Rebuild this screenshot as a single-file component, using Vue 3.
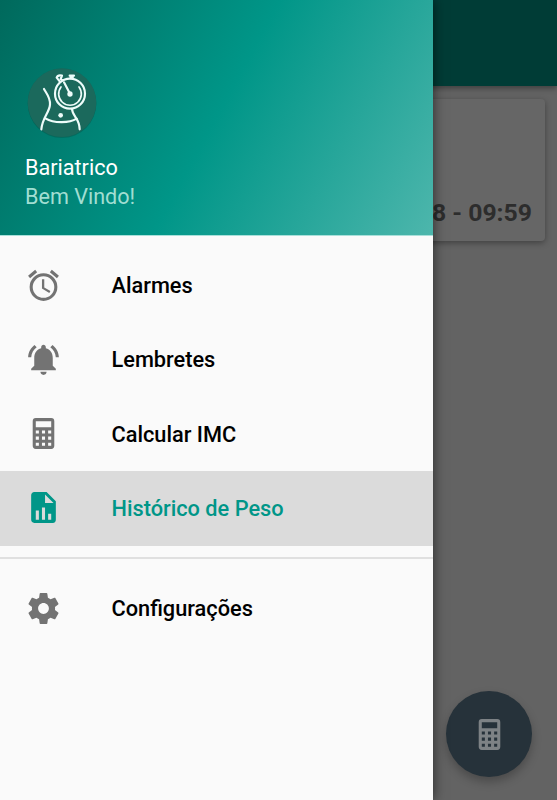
<script setup>
const calculator =
  'M7,2H17A2,2 0 0,1 19,4V20A2,2 0 0,1 17,22H7A2,2 0 0,1 5,20V4A2,2 0 0,1 7,2M7,4V8H17V4H7M7,10V12H9V10H7M11,10V12H13V10H11M15,10V12H17V10H15M7,14V16H9V14H7M11,14V16H13V14H11M15,14V16H17V14H15M7,18V20H9V18H7M11,18V20H13V18H11M15,18V20H17V18H15Z'

const groups = [
  [
    {
      label: 'Alarmes',
      icon: 'M12,20A7,7 0 0,1 5,13A7,7 0 0,1 12,6A7,7 0 0,1 19,13A7,7 0 0,1 12,20M12,4A9,9 0 0,0 3,13A9,9 0 0,0 12,22A9,9 0 0,0 21,13A9,9 0 0,0 12,4M12.5,8H11V14L15.75,16.85L16.5,15.62L12.5,13.25V8M7.88,3.39L6.6,1.86L2,5.71L3.29,7.24L7.88,3.39M22,5.72L17.4,1.86L16.11,3.39L20.71,7.25L22,5.72Z',
    },
    {
      label: 'Lembretes',
      icon: 'M7.58 4.08L6.15 2.65C3.75 4.48 2.17 7.3 2.03 10.5h2c.15-2.65 1.51-4.97 3.55-6.42zm12.39 6.42h2c-.15-3.2-1.73-6.02-4.12-7.85l-1.42 1.43c2.02 1.45 3.39 3.77 3.54 6.42zM18 11c0-3.07-1.64-5.64-4.5-6.32V4c0-.83-.67-1.5-1.5-1.5s-1.5.67-1.5 1.5v.68C7.63 5.36 6 7.92 6 11v5l-2 2v1h16v-1l-2-2v-5zm-6 11c.14 0 .27-.01.4-.04.65-.14 1.18-.58 1.44-1.18.1-.24.15-.5.15-.78h-4c.01 1.1.9 2 2.01 2z',
    },
    { label: 'Calcular IMC', icon: calculator },
    {
      label: 'Histórico de Peso',
      active: true,
      icon: 'M13,9H18.5L13,3.5V9M6,2H14L20,8V20A2,2 0 0,1 18,22H6C4.89,22 4,21.1 4,20V4C4,2.89 4.89,2 6,2M7,20H9V14H7V20M11,20H13V12H11V20M15,20H17V16H15V20Z',
    },
  ],
  [
    {
      label: 'Configurações',
      icon: 'M19.43 12.98c.04-.32.07-.64.07-.98s-.03-.66-.07-.98l2.11-1.65c.19-.15.24-.42.12-.64l-2-3.46c-.12-.22-.39-.3-.61-.22l-2.49 1c-.52-.4-1.08-.73-1.69-.98l-.38-2.65C14.46 2.18 14.25 2 14 2h-4c-.25 0-.46.18-.49.42l-.38 2.65c-.61.25-1.17.59-1.69.98l-2.49-1c-.23-.09-.49 0-.61.22l-2 3.46c-.13.22-.07.49.12.64l2.11 1.65c-.04.32-.07.65-.07.98s.03.66.07.98l-2.11 1.65c-.19.15-.24.42-.12.64l2 3.46c.12.22.39.3.61.22l2.49-1c.52.4 1.08.73 1.69.98l.38 2.65c.03.24.24.42.49.42h4c.25 0 .46-.18.49-.42l.38-2.65c.61-.25 1.17-.59 1.69-.98l2.49 1c.23.09.49 0 .61-.22l2-3.46c.12-.22.07-.49-.12-.64l-2.11-1.65zM12 15.5c-1.93 0-3.5-1.57-3.5-3.5s1.57-3.5 3.5-3.5 3.5 1.57 3.5 3.5-1.57 3.5-3.5 3.5z',
    },
  ],
]
</script>

<template>
  <div class="screen">
    <main class="page">
      <header class="toolbar"></header>
      <section class="card">
        <span class="stamp">8 - 09:59</span>
      </section>
      <button class="fab" aria-label="Calcular IMC">
        <svg class="icon" viewBox="0 0 24 24"><path :d="calculator" /></svg>
      </button>
    </main>

    <aside class="drawer">
      <div class="profile">
        <svg class="avatar" viewBox="36 39 210 210">
          <circle cx="141" cy="143" r="103" class="disc" />
          <g class="lines">
            <circle cx="165" cy="116" r="45" />
            <path d="M138 96 A34 34 0 1 0 192 96" class="thin" />
            <path d="M147 82L165 116" />
            <path d="M134 79L125 68Q128 59 141 62L137 72L143 76" />
            <path d="M164 62H177M167 62V70M173 62V70" />
            <path d="M87 102C94 115 106 127 105 148C104 172 82 187 79 223" />
            <path d="M171 162C172 184 194 190 194 223" />
            <path d="M91 190C116 205 163 205 185 191" />
          </g>
          <circle cx="165" cy="117" r="8" class="dot" />
          <circle cx="137" cy="181" r="7" class="dot" />
        </svg>
        <div class="name">Bariatrico</div>
        <div class="greeting">Bem Vindo!</div>
      </div>
      <nav class="menu">
        <ul v-for="(group, i) in groups" :key="i" class="group">
          <li v-for="item in group" :key="item.label" class="item" :class="{ active: item.active }">
            <svg class="icon" viewBox="0 0 24 24"><path :d="item.icon" /></svg>
            <span>{{ item.label }}</span>
          </li>
        </ul>
      </nav>
    </aside>
  </div>
</template>

<style>
body {
  margin: 0;
}
</style>

<style scoped>
.screen {
  position: relative;
  height: 800px;
  overflow: hidden;
  font-family: Roboto, sans-serif;
}
.page {
  height: 100%;
  background: #636363;
}
.toolbar {
  height: 86px;
  background: #003c36;
  box-shadow: 0 2px 6px rgba(0, 0, 0, 0.4);
}
.card {
  display: flex;
  align-items: flex-end;
  justify-content: flex-end;
  box-sizing: border-box;
  height: 142px;
  margin: 13px 12px 0;
  padding: 0 13px 14px;
  border-radius: 4px;
  background: #666;
  box-shadow: 0 2px 6px rgba(0, 0, 0, 0.35);
}
.stamp {
  font-size: 24.75px;
  line-height: 29px;
  font-weight: 700;
  color: #2d2d2d;
}
.fab {
  position: absolute;
  right: 25px;
  bottom: 23px;
  display: flex;
  align-items: center;
  justify-content: center;
  width: 86px;
  height: 86px;
  padding: 0;
  border: 0;
  border-radius: 50%;
  background: #26323a;
  color: #7d8285;
  box-shadow: 0 5px 10px rgba(0, 0, 0, 0.25);
}
.drawer {
  position: absolute;
  top: 0;
  left: 0;
  width: 433px;
  height: 100%;
  background: #fafafa;
  box-shadow: 0 0 12px rgba(0, 0, 0, 0.6);
}
.profile {
  box-sizing: border-box;
  height: 236px;
  padding: 67.5px 25px 0;
  border-bottom: 1px solid #a9e0da;
  background: linear-gradient(118.5deg, #00695c, #009688 50%, #4db6ac);
  font-size: 21.6px;
}
.avatar {
  display: block;
  width: 70px;
  height: 70px;
  margin: 0 0 15px 2px;
}
.disc {
  fill: #1b695c;
  filter: drop-shadow(0 2px 2px rgba(0, 60, 50, 0.4));
}
.lines {
  fill: none;
  stroke: #eefcfa;
  stroke-width: 6.5;
  stroke-linecap: round;
  stroke-linejoin: round;
}
.thin {
  stroke-width: 5;
}
.dot {
  fill: #eefcfa;
}
.name,
.greeting {
  line-height: 29.5px;
}
.name {
  color: #fff;
}
.greeting {
  color: #a0ded2;
}
.group {
  margin: 0;
  padding: 12.5px 0 11.8px;
  list-style: none;
}
.group + .group {
  border-top: 2px solid #e0e0e0;
}
.item {
  display: flex;
  align-items: center;
  gap: 50px;
  height: 74.25px;
  padding-left: 24.5px;
  font-size: 21.75px;
  font-weight: 500;
  color: #000;
}
.item .icon {
  margin-bottom: 1px;
  color: #737373;
}
.item.active {
  background: #dbdbdb;
}
.item.active,
.item.active .icon {
  color: #009688;
}
.icon {
  flex: none;
  width: 37px;
  height: 37px;
  fill: currentColor;
  fill-rule: evenodd;
}
</style>
